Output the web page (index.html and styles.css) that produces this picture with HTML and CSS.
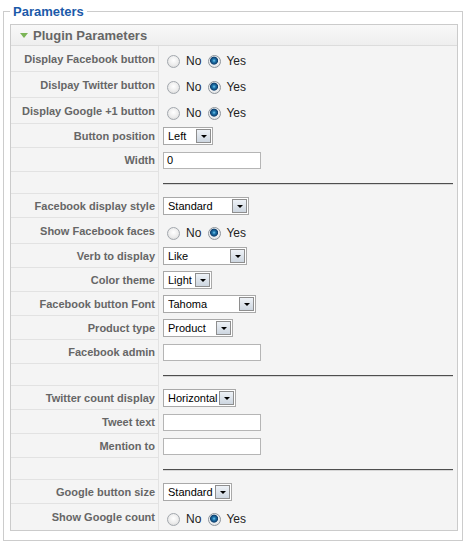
FILE: index.html
```html
<!DOCTYPE html>
<html lang="en">
<head>
    <meta charset="UTF-8">
    <title>Parameters</title>
    <link rel="stylesheet" href="styles.css">
</head>
<body>
    <fieldset class="adminform">
        <legend>Parameters</legend>

        <div class="panel">
            <h3 class="panel-title"><span class="toggler"></span>Plugin Parameters</h3>

            <table class="paramlist">
                <tr class="radio-row">
                    <td class="key">Display Facebook button</td>
                    <td class="value">
                        <input type="radio" name="fb_button" id="fb_button0"><label for="fb_button0">No</label>
                        <input type="radio" name="fb_button" id="fb_button1" checked><label for="fb_button1">Yes</label>
                    </td>
                </tr>
                <tr class="radio-row">
                    <td class="key">Dislpay Twitter button</td>
                    <td class="value">
                        <input type="radio" name="tw_button" id="tw_button0"><label for="tw_button0">No</label>
                        <input type="radio" name="tw_button" id="tw_button1" checked><label for="tw_button1">Yes</label>
                    </td>
                </tr>
                <tr class="radio-row">
                    <td class="key">Display Google +1 button</td>
                    <td class="value">
                        <input type="radio" name="g_button" id="g_button0"><label for="g_button0">No</label>
                        <input type="radio" name="g_button" id="g_button1" checked><label for="g_button1">Yes</label>
                    </td>
                </tr>
                <tr>
                    <td class="key">Button position</td>
                    <td class="value">
                        <span class="select w-left"><select><option>Left</option><option>Right</option></select></span>
                    </td>
                </tr>
                <tr>
                    <td class="key">Width</td>
                    <td class="value"><input type="text" class="text" value="0"></td>
                </tr>
                <tr class="sep-row">
                    <td class="key"></td>
                    <td class="value"><hr></td>
                </tr>

                <!-- facebook -->
                <tr>
                    <td class="key">Facebook display style</td>
                    <td class="value">
                        <span class="select w-style"><select><option>Standard</option><option>Button count</option><option>Box count</option></select></span>
                    </td>
                </tr>
                <tr class="radio-row">
                    <td class="key">Show Facebook faces</td>
                    <td class="value">
                        <input type="radio" name="fb_faces" id="fb_faces0"><label for="fb_faces0">No</label>
                        <input type="radio" name="fb_faces" id="fb_faces1" checked><label for="fb_faces1">Yes</label>
                    </td>
                </tr>
                <tr>
                    <td class="key">Verb to display</td>
                    <td class="value">
                        <span class="select w-verb"><select><option>Like</option><option>Recommend</option></select></span>
                    </td>
                </tr>
                <tr>
                    <td class="key">Color theme</td>
                    <td class="value">
                        <span class="select w-theme"><select><option>Light</option><option>Dark</option></select></span>
                    </td>
                </tr>
                <tr>
                    <td class="key">Facebook button Font</td>
                    <td class="value">
                        <span class="select w-font"><select><option>Tahoma</option><option>Arial</option><option>Verdana</option></select></span>
                    </td>
                </tr>
                <tr>
                    <td class="key">Product type</td>
                    <td class="value">
                        <span class="select w-product"><select><option>Product</option><option>Article</option></select></span>
                    </td>
                </tr>
                <tr>
                    <td class="key">Facebook admin</td>
                    <td class="value"><input type="text" class="text" value=""></td>
                </tr>
                <tr class="sep-row">
                    <td class="key"></td>
                    <td class="value"><hr></td>
                </tr>

                <!-- twitter -->
                <tr>
                    <td class="key">Twitter count display</td>
                    <td class="value">
                        <span class="select w-count"><select><option>Horizontal</option><option>Vertical</option><option>None</option></select></span>
                    </td>
                </tr>
                <tr>
                    <td class="key">Tweet text</td>
                    <td class="value"><input type="text" class="text" value=""></td>
                </tr>
                <tr>
                    <td class="key">Mention to</td>
                    <td class="value"><input type="text" class="text" value=""></td>
                </tr>
                <tr class="sep-row">
                    <td class="key"></td>
                    <td class="value"><hr></td>
                </tr>

                <!-- google -->
                <tr>
                    <td class="key">Google button size</td>
                    <td class="value">
                        <span class="select w-size"><select><option>Standard</option><option>Small</option><option>Medium</option><option>Tall</option></select></span>
                    </td>
                </tr>
                <tr class="radio-row last">
                    <td class="key">Show Google count</td>
                    <td class="value">
                        <input type="radio" name="g_count" id="g_count0"><label for="g_count0">No</label>
                        <input type="radio" name="g_count" id="g_count1" checked><label for="g_count1">Yes</label>
                    </td>
                </tr>
            </table>
        </div>
    </fieldset>
</body>
</html>
```

FILE: styles.css
```css
body {
    margin: 0;
    background: #fff;
    font-family: "Liberation Sans", Arial, sans-serif;
    font-size: 11px;
    color: #333;
}
fieldset.adminform {
    margin: 4px 4px 0 3px;
    padding: 5px 4px 9px 6px;
    border: 1px solid #ccc;
}
fieldset.adminform legend {
    padding: 0 3px;
    line-height: 15px;
    font-size: 13px;
    font-weight: bold;
    color: #1b5aa9;
}
.panel {
    border: 1px solid #cbcbcb;
    background: #f4f4f4;
}
.panel-title {
    margin: 0;
    height: 20px;
    padding-left: 9px;
    display: flex;
    align-items: center;
    gap: 5px;
    font-size: 13px;
    font-weight: bold;
    color: #666;
    background: linear-gradient(#f8f8f8, #eeeeee);
    border-bottom: 1px solid #dcdcdc;
}
.toggler {
    width: 0;
    height: 0;
    border-left: 4px solid transparent;
    border-right: 4px solid transparent;
    border-top: 5px solid #7bb456;
}
table.paramlist {
    width: 100%;
    border-collapse: separate;
    border-spacing: 0;
}
table.paramlist tr {
    height: 24px;
}
table.paramlist tr.radio-row {
    height: 26px;
}
table.paramlist tr.sep-row {
    height: 22px;
}
table.paramlist tr.last td {
    border-bottom: none;
}
td.key {
    width: 144px;
    padding: 0 3px 0 0;
    text-align: right;
    white-space: nowrap;
    font-weight: bold;
    color: #666;
    border-right: 1px solid #e2e2e2;
    border-bottom: 1px solid #e2e2e2;
}
td.value {
    padding: 0 4px;
    vertical-align: middle;
    white-space: nowrap;
}
.radio-row td.value {
    padding-top: 5px;
}
td.value label {
    font-size: 12px;
    color: #222;
    vertical-align: middle;
}
input[type="radio"] {
    appearance: none;
    width: 13px;
    height: 13px;
    margin: 0 6px 0 4px;
    vertical-align: middle;
    border: 1px solid #a2a7ad;
    border-radius: 50%;
    background: radial-gradient(circle at 50% 40%, #ffffff 0, #ececec 55%, #d2d2d2 100%);
}
input[type="radio"] + label + input[type="radio"] {
    margin-left: 4px;
    margin-right: 5px;
}
input[type="radio"]:checked {
    border-color: #8d949b;
    background: radial-gradient(circle at 46% 42%, #7ccbef 0, #1f79b0 1.5px, #0e3f6e 3.6px, #eef0f2 4.4px, #d6d6d6 100%);
}
td.value hr {
    margin: 2px 0 0;
    height: 0;
    border: none;
    border-top: 1px solid #4e4e4e;
    border-bottom: 1px solid #d6d6d6;
}
input.text {
    box-sizing: border-box;
    width: 98px;
    height: 17px;
    margin: 0;
    padding: 0 3px;
    border: 1px solid #b5b5b5;
    background: #fff;
    font-family: "Liberation Sans", Arial, sans-serif;
    font-size: 11px;
    color: #000;
    vertical-align: middle;
}
.select {
    position: relative;
    display: inline-block;
    vertical-align: middle;
}
.select select {
    appearance: none;
    box-sizing: border-box;
    width: 100%;
    height: 18px;
    margin: 0;
    padding: 0 0 0 4px;
    border: 1px solid #a9a9a9;
    border-radius: 0;
    background: #fff;
    font-family: "Liberation Sans", Arial, sans-serif;
    font-size: 11px;
    color: #000;
    display: block;
}
.select::after {
    content: "";
    position: absolute;
    top: 2px;
    right: 2px;
    width: 13px;
    height: 12px;
    border: 1px solid #8e8e8e;
    background: linear-gradient(#eef2f7, #cdd6e0);
    pointer-events: none;
}
.select::before {
    content: "";
    position: absolute;
    top: 8px;
    right: 6px;
    width: 0;
    height: 0;
    border-left: 3px solid transparent;
    border-right: 3px solid transparent;
    border-top: 3px solid #000;
    z-index: 1;
    pointer-events: none;
}
.w-left { width: 50px; }
.w-style { width: 86px; }
.w-verb { width: 84px; }
.w-theme { width: 49px; }
.w-font { width: 93px; }
.w-product { width: 70px; }
.w-count { width: 73px; }
.w-size { width: 69px; }
```
